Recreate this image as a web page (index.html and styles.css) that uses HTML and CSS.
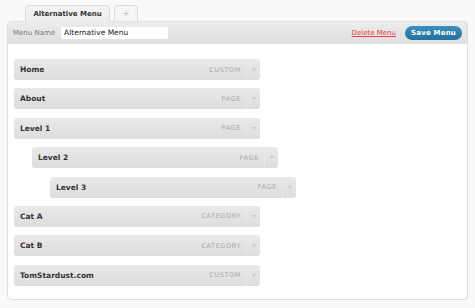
FILE: index.html
```html
<!DOCTYPE html>
<html>
<head>
<meta charset="utf-8">
<link rel="stylesheet" href="styles.css">
</head>
<body>
<div class="tabs">
  <div class="tab active">Alternative Menu</div>
  <div class="tab plus">+</div>
</div>
<div class="panel">
  <div class="header">
    <label class="name-label">Menu Name</label>
    <div class="name-input">Alternative Menu</div>
    <div class="spacer"></div>
    <a class="delete">Delete Menu</a>
    <div class="save">Save Menu</div>
  </div>
  <div class="items">
    <div class="item d0"><span class="title">Home</span><span class="type">Custom</span><span class="arrow"></span></div>
    <div class="item d0"><span class="title">About</span><span class="type">Page</span><span class="arrow"></span></div>
    <div class="item d0"><span class="title">Level 1</span><span class="type">Page</span><span class="arrow"></span></div>
    <div class="item d1"><span class="title">Level 2</span><span class="type">Page</span><span class="arrow"></span></div>
    <div class="item d2"><span class="title">Level 3</span><span class="type">Page</span><span class="arrow"></span></div>
    <div class="item d0"><span class="title">Cat A</span><span class="type">Category</span><span class="arrow"></span></div>
    <div class="item d0"><span class="title">Cat B</span><span class="type">Category</span><span class="arrow"></span></div>
    <div class="item d0"><span class="title">TomStardust.com</span><span class="type">Custom</span><span class="arrow"></span></div>
  </div>
</div>
</body>
</html>
```
FILE: styles.css
```css
html, body {
  margin: 0;
  padding: 0;
  background: #f9f9f9;
  font-family: "DejaVu Sans", Verdana, sans-serif;
  color: #333;
}
.tabs {
  display: flex;
  gap: 4px;
  padding: 5px 0 0 25px;
  height: 16px;
  position: relative;
  z-index: 1;
}
.tab {
  box-sizing: border-box;
  height: 17px;
  border: 1px solid #dcdcdc;
  border-bottom: none;
  border-radius: 4px 4px 0 0;
  display: flex;
  align-items: center;
  justify-content: center;
  font-size: 7.5px;
}
.tab.active {
  width: 85px;
  font-weight: bold;
  font-size: 7px;
  background: linear-gradient(#f4f4f4, #ececec);
  color: #333;
}
.tab.plus {
  width: 24px;
  height: 16px;
  background: #f6f6f6;
  color: #bbb;
  font-size: 8px;
}
.panel {
  margin: 0 7px 0 7px;
  border: 1px solid #dfdfdf;
  border-radius: 4px;
  background: #fff;
  height: 279px;
  box-sizing: border-box;
  overflow: hidden;
}
.header {
  height: 21px;
  background: linear-gradient(#ececec, #dfdfdf);
  display: flex;
  align-items: center;
  padding: 0 5px 0 5px;
  border-bottom: 1px solid #e4e4e4;
}
.name-label {
  font-size: 7px;
  color: #777;
  margin-right: 6px;
}
.name-input {
  width: 107px;
  height: 12px;
  box-sizing: border-box;
  background: #fff;
  border-radius: 2px;
  font-size: 7.5px;
  line-height: 12px;
  padding-left: 3px;
  color: #222;
}
.spacer { flex: 1; }
.delete {
  color: #f04040;
  font-size: 7px;
  text-decoration: underline;
  margin-right: 9px;
}
.save {
  width: 57px;
  height: 14px;
  box-sizing: border-box;
  border-radius: 8px;
  background: linear-gradient(#3b8fbf, #21729d);
  color: #fff;
  font-weight: bold;
  font-size: 7px;
  display: flex;
  align-items: center;
  justify-content: center;
  letter-spacing: 0.2px;
}
.items {
  display: flex;
  flex-direction: column;
  gap: 8.4px;
  padding: 15px 0 0 6px;
}
.item {
  width: 246px;
  height: 21px;
  box-sizing: border-box;
  border-radius: 3px;
  background: linear-gradient(#e9e9e9, #dddddd);
  display: flex;
  align-items: center;
}
.item.d1 { margin-left: 18px; }
.item.d2 { margin-left: 36px; }
.title {
  flex: 1;
  padding-left: 6px;
  font-size: 7.5px;
  font-weight: bold;
  color: #333;
}
.type {
  font-size: 6.5px;
  color: #a8a8a8;
  text-transform: uppercase;
  letter-spacing: 0.6px;
  padding-right: 5px;
}
.arrow {
  width: 13px;
  height: 21px;
  border-left: 1px solid #e8e8e8;
  display: flex;
  align-items: center;
  justify-content: center;
}
.arrow::after {
  content: "";
  border-left: 2.5px solid transparent;
  border-right: 2.5px solid transparent;
  border-top: 3px solid #c8c8c8;
}
```
